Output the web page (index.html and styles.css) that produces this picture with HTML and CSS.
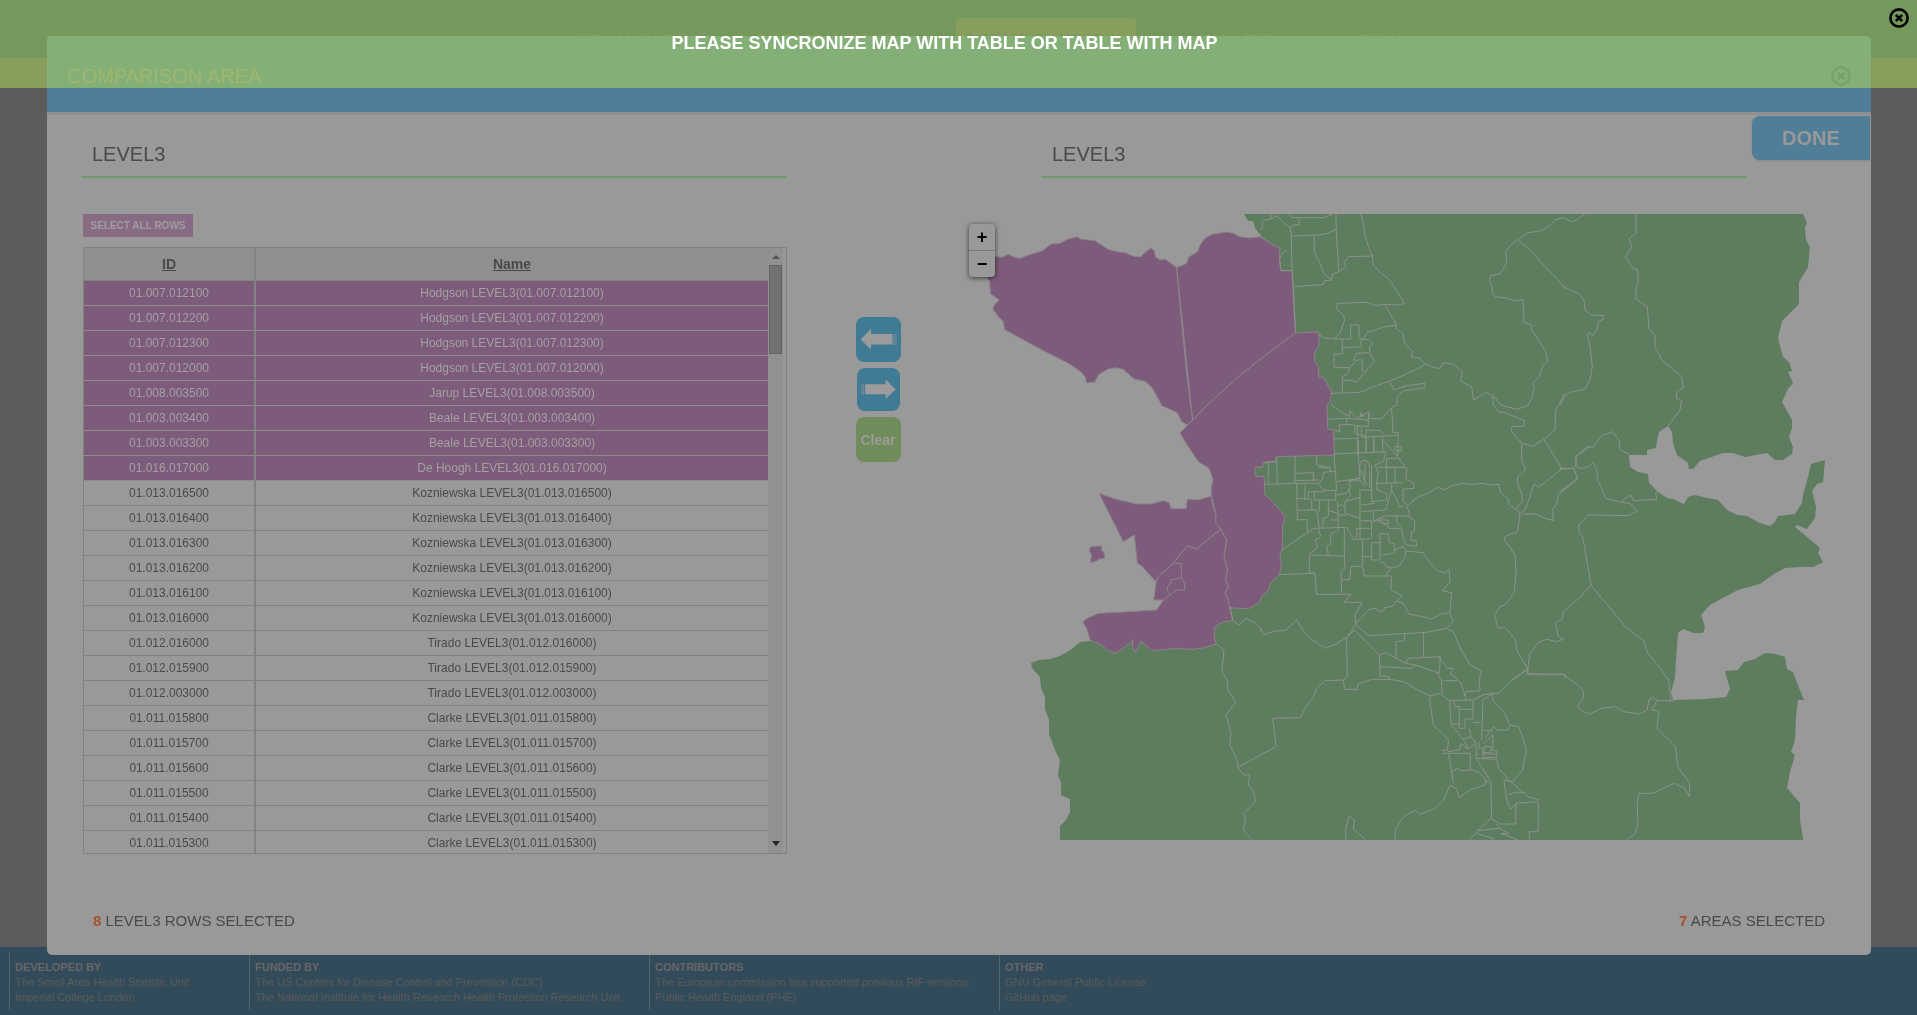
FILE: index.html
```html
<!DOCTYPE html>
<html lang="en">
<head>
<meta charset="utf-8">
<title>Comparison area</title>
<link rel="stylesheet" href="styles.css">
</head>
<body>
<div class="page">
  <header class="site-header">
    <nav class="site-nav">
      <a class="tab tab-risk" href="#">RISK ANALYSIS</a>
      <a class="tab tab-mapping" href="#">DISEASE MAPPING</a>
      <a class="tab tab-submission current" href="#">DISEASE SUBMISSION</a>
      <a class="tab tab-manager" href="#">MANAGER</a>
      <a class="tab tab-login" href="#">LOG IN</a>
    </nav>
    <div class="strip"></div>
  </header>
  <main class="backdrop"></main>
  <footer class="site-footer">
    <section class="credit credit-dev"><h4>DEVELOPED BY</h4><a href="#">The Small Area Health Statistic Unit</a><a href="#">Imperial College London</a></section>
    <section class="credit credit-fund"><h4>FUNDED BY</h4><a href="#">The US Centers for Disease Control and Prevention (CDC)</a><a href="#">The National Institute for Health Research Health Protection Research Unit</a></section>
    <section class="credit credit-contrib"><h4>CONTRIBUTORS</h4><a href="#">The European commission has supported previous RIF versions</a><a href="#">Public Health England (PHE)</a></section>
    <section class="credit"><h4>OTHER</h4><a href="#">GNU General Public License</a><a href="#">GitHub page</a></section>
  </footer>
</div>

<div class="modal" role="dialog" aria-labelledby="modal-title">
  <div class="modal-header">
    <h1 id="modal-title">COMPARISON AREA</h1>
    <button class="close close-modal" aria-label="Close comparison area"><svg viewBox="0 0 20 20" width="20" height="20"><circle cx="10" cy="10" r="8.6"/><path d="M6.8 6.8l6.4 6.4M13.2 6.8l-6.4 6.4"/></svg></button>
  </div>
  <button class="done">DONE</button>
  <div class="titles">
    <h2>LEVEL3</h2>
    <h2>LEVEL3</h2>
  </div>
  <div class="content">
    <div class="table-side">
      <button class="select-all">SELECT ALL ROWS</button>
      <div class="grid-box">
        <table class="areas">
          <thead><tr><th class="col-id">ID</th><th>Name</th></tr></thead>
          <tbody>
            <tr class="on"><td>01.007.012100</td><td>Hodgson LEVEL3(01.007.012100)</td></tr>
            <tr class="on"><td>01.007.012200</td><td>Hodgson LEVEL3(01.007.012200)</td></tr>
            <tr class="on"><td>01.007.012300</td><td>Hodgson LEVEL3(01.007.012300)</td></tr>
            <tr class="on"><td>01.007.012000</td><td>Hodgson LEVEL3(01.007.012000)</td></tr>
            <tr class="on"><td>01.008.003500</td><td>Jarup LEVEL3(01.008.003500)</td></tr>
            <tr class="on"><td>01.003.003400</td><td>Beale LEVEL3(01.003.003400)</td></tr>
            <tr class="on"><td>01.003.003300</td><td>Beale LEVEL3(01.003.003300)</td></tr>
            <tr class="on"><td>01.016.017000</td><td>De Hoogh LEVEL3(01.016.017000)</td></tr>
            <tr><td>01.013.016500</td><td>Kozniewska LEVEL3(01.013.016500)</td></tr>
            <tr><td>01.013.016400</td><td>Kozniewska LEVEL3(01.013.016400)</td></tr>
            <tr><td>01.013.016300</td><td>Kozniewska LEVEL3(01.013.016300)</td></tr>
            <tr><td>01.013.016200</td><td>Kozniewska LEVEL3(01.013.016200)</td></tr>
            <tr><td>01.013.016100</td><td>Kozniewska LEVEL3(01.013.016100)</td></tr>
            <tr><td>01.013.016000</td><td>Kozniewska LEVEL3(01.013.016000)</td></tr>
            <tr><td>01.012.016000</td><td>Tirado LEVEL3(01.012.016000)</td></tr>
            <tr><td>01.012.015900</td><td>Tirado LEVEL3(01.012.015900)</td></tr>
            <tr><td>01.012.003000</td><td>Tirado LEVEL3(01.012.003000)</td></tr>
            <tr><td>01.011.015800</td><td>Clarke LEVEL3(01.011.015800)</td></tr>
            <tr><td>01.011.015700</td><td>Clarke LEVEL3(01.011.015700)</td></tr>
            <tr><td>01.011.015600</td><td>Clarke LEVEL3(01.011.015600)</td></tr>
            <tr><td>01.011.015500</td><td>Clarke LEVEL3(01.011.015500)</td></tr>
            <tr><td>01.011.015400</td><td>Clarke LEVEL3(01.011.015400)</td></tr>
            <tr><td>01.011.015300</td><td>Clarke LEVEL3(01.011.015300)</td></tr>
          </tbody>
        </table>
        <div class="scrollbar" aria-hidden="true">
          <span class="arrow arrow-up"></span>
          <span class="thumb"></span>
          <span class="arrow arrow-down"></span>
        </div>
      </div>
    </div>
    <div class="sync">
      <button class="sync-btn" aria-label="Map to table"><svg viewBox="0 0 45 45"><path d="M4.500 22.500L15 12V17H36.500V27.500H15V32.500z"/><path class="tail" d="M38 17v11M40 17v11"/></svg></button>
      <button class="sync-btn small" aria-label="Table to map"><svg viewBox="0 0 45 45"><path d="M40.500 22.500L30 12V17H8.500V27.500H30V32.500z"/><path class="tail" d="M7 17v11M5 17v11"/></svg></button>
      <button class="sync-btn clear">Clear</button>
    </div>
    <div class="map">
      <svg class="map-canvas" viewBox="969 214 856 626" role="img" aria-label="Map of areas">
        <path class="land" d="M1244,214L1248,221 1253,221 1255,228 1262,237 1279,250 1285,300 1290,340 1290,420 1262,462 1254,466 1254,475 1264,478 1265,500 1270,580 1240,600 1215,625 1212,638 1150,645 1141,638 1133,638 1115,648 1095,638 1090,641 1080,642 1072,649 1060,656 1050,659 1039,660 1031,663 1032,668 1040,677 1041,688 1045,697 1045,709 1049,720 1049,734 1055,750 1060,760 1058,776 1061,782 1061,795 1070,799 1070,812 1066,820 1060,826 1060,840H1803L1803,838 1800,820 1800,803 1787,788 1790,772 1795,755 1791,752 1795,740 1796,717 1798,700 1804,700 1799,688 1793,672 1787,669 1785,657 1776,654 1765,653 1755,659 1744,662 1738,670 1725,671 1730,689 1726,697 1706,699 1673,700 1671,692 1675,678 1676,660 1678,633 1683,629 1694,633 1703,633 1705,627 1701,615 1710,605 1719,600 1738,590 1760,584 1774,574 1785,568 1800,567 1813,567 1823,562 1818,553 1820,548 1807,537 1795,527 1797,525 1807,529 1815,518 1816,507 1812,491 1817,484 1823,482 1825,460 1811,464 1808,477 1803,495 1802,503 1795,514 1778,516 1775,522 1770,526 1760,523 1747,516 1737,515 1727,510 1718,500 1707,498 1695,495 1688,497 1684,504 1673,499 1667,498 1657,491 1649,483 1648,474 1638,472 1630,467 1629,455 1647,455 1647,450 1656,448 1657,441 1659,432 1668,426 1672,432 1673,443 1677,455 1688,463 1689,469 1693,469 1700,461 1723,453 1733,453 1745,457 1767,453 1775,460 1783,460 1792,454 1793,447 1789,437 1792,428 1792,420 1782,402 1788,389 1793,383 1788,372 1792,371 1789,362 1783,357 1778,338 1782,321 1799,304 1799,282 1808,267 1810,247 1806,240 1805,227 1807,223 1803,214z"/>
        <!-- areas picked in the table -->
        <g class="picked" transform="translate(960 200) scale(.33333)">
          <path d="M100,168L125,172 145,163 165,172 180,175 215,162 248,152 262,140 275,132 300,130 325,117 352,110 360,117 405,122 425,135 445,148 470,155 495,158 525,170 542,170 560,153 572,145 582,150 587,172 603,180 615,177 640,195 650,203 663,345 680,520 698,660 682,675 665,665 652,638 605,617 597,600 575,562 557,545 522,537 490,508 465,503 442,508 415,525 405,546 380,549 375,530 362,515 325,490 250,452 134,389 130,365 115,350 98,326 105,312 118,300 92,282 88,240 82,237z"/>
          <path d="M650,203L680,190 685,172 712,155 720,135 735,115 755,103 800,96 820,100 840,110 870,114 900,110 940,135 960,145 958,180 962,212 996,212 1000,300 1007,399 940,448 845,522 745,612 698,660z"/>
          <path d="M660,698L698,660 745,612 845,522 940,448 1007,399 1077,396 1077,435 1063,460 1065,485 1075,500 1077,530 1090,532 1115,575 1111,605 1101,615 1103,687 1120,690 1124,765 950,770 945,783 912,787 908,800 885,802 885,822 888,828 912,830 915,885 938,905 975,950 968,980 967,1045 960,1065 964,1100 957,1125 930,1150 927,1170 908,1185 895,1210 865,1226 840,1225 808,1223 805,1200 795,1180 805,1160 797,1140 802,1110 792,1070 800,1020 782,988 765,970 768,945 755,890 753,870 759,838 747,805 715,785 680,733z"/>
        </g>
        <g class="picked" transform="translate(1060 440) scale(.33333)">
          <path d="M117,160L170,178 230,192 272,192 310,182 328,188 333,206 378,206 382,177 415,180 453,168 458,195 468,225 467,250 482,268 445,297 410,327 383,317 335,375 295,410 288,425 245,378 232,370 223,285 190,305z"/>
          <path d="M482,268L500,300 492,350 502,390 497,420 505,440 495,460 505,480 510,510 518,542 490,545 463,562 463,590 469,612 425,625 395,628 350,625 275,632 244,604 226,636 217,620 220,600 190,625 165,640 145,632 125,615 90,600 80,565 68,546 82,535 115,520 205,515 290,510 310,480 281,480 288,430 295,410 335,375 383,317 410,327 445,297z"/>
          <path d="M90,322L100,319 125,318 125,332 131,335 135,355 115,358 110,363 92,368 94,345 88,332z"/>
          <path class="inner" d="M340,370H363L365,415 374,432 374,450 350,450 325,468 310,480M330,465L322,450 322,440 332,432 332,420 365,413"/>
        </g>
        <!-- boundaries, north -->
        <g class="lines" transform="translate(1260 200) scale(.33333)">
          <path d="M32,42V57L7,62V85L0,90M32,57L52,47 72,70 90,83 102,75 118,74 117,53 95,52 88,42M117,53L190,53 218,42M90,83L94,108 175,105 205,100 227,88M228,42L229,100 237,215M94,108L96,212 100,260 104,345 107,398M62,212H96M58,180L68,158 80,150M100,260L190,254 192,243 215,240 218,222 237,215 258,200 252,188 265,170 338,168M162,108L163,155 180,190 192,222 215,240"/>
          <path d="M303,42L310,70 315,105 325,140 337,168 340,195 365,222 385,235 412,275 433,310 415,315 380,313 345,316 320,307 232,310 231,330 250,343 254,360 240,400 222,417 190,413 177,402"/>
          <path d="M375,313L395,350 410,372 407,385 430,402 433,428 458,455 453,470 480,475 495,492 525,503 540,505 550,488 580,493 607,515 602,543 635,560 641,600 678,577 703,590 722,615 770,628 805,617 817,590 823,560 818,550 838,530 850,495 863,485 858,455 832,415 815,390 815,375 790,367 792,340 788,298 765,303 735,293 705,290 697,280 697,262 688,240 692,228 722,220 740,190 738,155 750,138 772,118 805,98 845,92 870,76 885,60 910,53 935,65 955,58 975,42"/>
          <path d="M772,118L815,155 850,195 890,235 912,263M915,580L887,630 885,690 852,718 818,738 785,730 755,695 755,680 793,678 793,662 735,638 715,635 700,615 698,590"/>
          <path d="M410,375L375,380 320,398 313,417 305,420M222,417H272V375H297V415L328,420 338,432 328,440 330,457 343,485 312,520 290,547 270,540 247,543M247,420V462H222V503H270L290,480H307V515M247,443L303,440V418M280,482L290,460 328,458M270,503L262,522 247,530V577"/>
          <path d="M211,580L300,577 350,557 388,543 440,522 480,503 495,492M388,543L402,570 440,557 495,550V563L430,573 412,590 410,615 395,622 365,657 328,655 327,635 290,655 270,632 268,650 250,640 237,630 222,622 215,610M395,625L399,698H415L413,770"/>
          <path d="M785,732V780L797,810 773,830 772,850 785,880 787,905 768,925M852,718L902,800 900,812 835,862 822,852 810,890 795,930 780,940M902,808L942,805M990,740L948,768V800"/>
          <path d="M203,658L260,655 325,660M222,690L240,695 237,675 260,673V655M260,673L325,680V640M285,678V700L320,710M293,678V765M222,717L295,715M305,680V712L413,706M318,690V760M318,690L360,692 375,705M342,708V755M368,708V755M300,640L312,647 300,650 305,638M405,740H425V752H405z"/>
        </g>
        <!-- boundaries, centre -->
        <g class="lines" transform="translate(1260 440) scale(.33333)">
          <path d="M413,50L430,75 440,85 438,118 460,128 463,145 428,148 430,185 445,195M445,195L475,170 505,160 535,140 550,150 575,138 605,130 640,133 670,130 690,135 718,133 720,155 745,178 747,195 765,205 777,215 780,225 773,275 733,290 735,302 765,345 768,400 762,460 735,495 720,500 703,525 715,565 735,562 767,600 770,630 803,688 805,703H915V715M787,222L825,222 850,233 880,242 878,205 890,195 895,160 952,115 942,90M960,472L910,515 908,535 887,548 895,590 910,598 890,605 860,598 835,607 810,640 803,688"/>
          <path d="M0,565L10,585 45,573 75,572 110,540 130,572 150,595 195,625 230,612 270,585 287,550 305,533 325,510 345,505 365,517 375,503 397,498 410,483 430,490 447,522 500,533 515,538 540,523 568,518 580,545 560,565 500,577 325,587 287,553M570,518L575,458 547,452 570,425 567,388 555,398 530,392 500,355 490,338 437,333M287,550L285,525 307,487 252,487 273,463 170,463 165,400 57,404M165,400L148,398V345L253,348 255,385 243,395 245,460M395,408L393,450 427,467 410,483M245,420L270,418 272,380 308,378 313,408 390,408M435,333L437,350 415,380 395,382 378,408M395,382L378,380 375,370 360,365"/>
          <path d="M65,330L162,265 260,262 280,298 330,297M148,340L172,325 165,300 182,290 175,262M205,345L200,318 213,315 210,285 235,270 233,185M253,262V350M308,298V375M335,308V360H360V280L385,282 388,308 403,310V340L365,345M335,308H360M308,350H335M403,330L430,320 440,333M388,265L425,265 430,300 440,315 470,318 468,302 453,300 455,275 465,272 463,240 450,235 445,210 437,195M330,248L355,240 390,265M340,243L375,228 445,228M355,240L385,240V252L360,247M410,228V248L425,262"/>
          <path d="M12,68L50,65M25,68V130M50,50L52,130M105,48V130M15,133L110,130M107,100L160,98V125M170,45V75L210,82 212,95 190,97 188,118 175,130M175,82L205,85M107,122L175,120M110,130L175,130 190,150 230,152M210,95H228M110,130L112,240 140,238 143,275M110,175L155,178M135,130V180M145,172V155H195M163,155V180H227V155M112,210H170L178,262M155,180V210M178,180V215M205,180V230L190,235 188,262M205,212L235,220M222,42L230,150M295,0V38L300,115 230,125M222,42L378,35M318,0V35M340,0V35M368,0L413,50"/>
          <path d="M300,75L305,62H320L328,75 330,145M300,75V110M300,115L265,122 272,140 260,160 230,165M305,90L315,130 330,140M315,70V130M345,75L355,100 350,130 430,128M335,75V150M380,55L378,82H405V130M380,82V128M355,82H435M380,55H413M345,75L370,65 378,35M300,150V295M303,150H335V185L380,180V160L350,150V130M303,195L345,190M303,215L378,210 385,180 395,150V130M395,150L415,190V200H430M340,215V240M303,242H335V295M255,185L300,172M265,145L272,165 255,185V220L300,235M235,225H258M233,200L245,193 255,205M210,240H235M290,293V265H330M270,125L300,120 315,140"/>
          <path d="M755,720L803,688"/>
        </g>
        <!-- boundaries, east -->
        <g class="lines" transform="translate(1560 200) scale(.33333)">
          <path d="M12,263L20,258 12,263 55,280 72,300 75,330 95,345 132,347 128,358 115,365 110,390 97,408 90,398 82,403 90,440 97,500 90,540 75,567 30,577 15,590 0,615M228,42V100L208,115 215,138 197,172 212,195 220,208 233,208 235,245 228,265 228,297 262,320 267,385 285,405 285,440 305,480 365,530 370,562 350,575V597L366,603 360,630 325,677"/>
          <path d="M208,764L180,748 178,722 157,695 125,707 100,740 80,742 48,770V800L60,805 80,803 100,787 110,810 113,840 138,895 185,907 195,895 212,885 220,902 290,898 287,878 298,872M0,805L42,805 52,838 0,880M185,907L210,910 232,933 205,947 85,945 57,975 57,995 68,1010 75,1050 93,1155 60,1191M93,1155L129,1200"/>
        </g>
        <!-- boundaries, south -->
        <g class="lines" transform="translate(1220 600) scale(.39541 .33333)">
          <path d="M-10,132L0,140 10,150 5,215 18,240 20,270 40,308 15,345 28,400 25,435 42,475 45,502 60,525 75,525 72,555 85,575 90,605 60,640 65,660 58,690 80,718M45,502L142,440 133,355 203,353 220,315 235,295 245,265 265,242 312,240 322,230 320,115M312,240L315,268H348V252L385,238 430,238 465,245 500,270 533,288"/>
          <path d="M25,20L33,62 48,75 65,55 90,70 108,92M322,105L342,92 403,165 405,228 428,230V240M403,200L485,205 495,195 555,220 557,170 475,175 470,190 495,195M403,165L418,158 470,190M445,175V125L467,122V102M515,98V172M548,165L575,205 590,205 582,220 610,250 620,290M575,88L590,95 610,150 632,195 662,213 655,240 658,272 620,275 622,300 580,302 555,280 533,288 530,300 540,375 578,420 575,450 562,452M548,220L560,240 562,280M565,242H600"/>
          <path d="M580,302L585,375 615,418 628,447 648,430 635,410 630,385M622,300H640L665,285 690,280M665,300L690,280 705,280 735,245 777,207V222L870,223 885,238 905,255 920,275 918,295 903,320 920,335 935,342 965,325 1000,320 1020,335 1060,342 1080,330 1085,300 1095,292 1105,302 1092,330 1110,333 1105,385 1152,440 1158,500 1188,550 1187,590 1175,565 1150,550 1120,565 1095,580 1060,580 1055,605 1057,670 1050,700 1030,718M1105,302H1148M970,0L1025,80 1070,120 1082,160 1110,200 1135,240 1140,300"/>
          <path d="M687,285L692,305 720,340 733,375 755,380 768,420 775,450 765,510 740,545 718,540 725,600 735,628 748,610 805,605V695H782V718M748,612V672H708L685,655 650,695 632,718M648,435V475L685,545 687,655M648,475L700,478 705,505 735,545 780,590 808,600M730,585L745,577H770M650,692L708,685 700,672M708,685L730,700 710,700 755,720M650,700L695,718M733,375L728,390 700,390 692,380 670,415M668,392H690M665,300L662,420M655,425V445L665,445V472H700V452H690V405L668,430M668,440H685V458H668zM665,462H700"/>
          <path d="M562,460H633V510M575,455L605,450 610,430 625,447M578,460L585,512 590,548M585,515L600,505 610,512 640,510 660,522 672,540 670,555 635,568 605,592 597,565 582,555 565,600 545,625 505,643 495,632 470,645 458,660 443,690V718M672,545L680,547M318,718V685L327,648 340,660 337,688 368,718M590,305L595,320H605V385H620V357H640V302M605,328H638M585,372H605M640,368H660M615,418L635,410"/>
        </g>
      </svg>
      <div class="zoom-control"><button aria-label="Zoom in">+</button><button aria-label="Zoom out">−</button></div>
    </div>
  </div>
  <div class="counts">
    <p><b>8</b> LEVEL3 ROWS SELECTED</p>
    <p><b>7</b> AREAS SELECTED</p>
  </div>
</div>

<div class="notice" role="alert">
  <p>PLEASE SYNCRONIZE MAP WITH TABLE OR TABLE WITH MAP</p>
  <button class="close" aria-label="Dismiss"><svg viewBox="0 0 20 20" width="20" height="20"><circle cx="10" cy="10" r="8.6"/><path d="M6.8 6.8l6.4 6.4M13.2 6.8l-6.4 6.4"/></svg></button>
</div>
</body>
</html>
```
FILE: styles.css
```css
* { box-sizing: border-box; }
body {
  margin: 0;
  font-family: "Liberation Sans", Arial, sans-serif;
  color: #4a4a4a;
  background: #5c5c5c;
}
h1, h2, h4, p { margin: 0; font-weight: normal; }
button { border: 0; padding: 0; font-family: inherit; cursor: pointer; }
a { color: inherit; text-decoration: none; }

/* page behind the dialog */
.page { display: flex; flex-direction: column; min-height: 100vh; }
.site-nav {
  display: flex;
  align-items: flex-end;
  height: 58px;
  padding-left: 542px;
  background: #1f303e;
}
.tab {
  height: 40px;
  padding-top: 12px;
  font-size: 15px;
  line-height: 17px;
  text-align: center;
  color: #5e413e;
  border-radius: 4px 4px 0 0;
}
.tab-risk { width: 180px; }
.tab-mapping { width: 208px; }
.tab-submission { width: 180px; margin-left: 26px; }
.tab-manager { width: 200px; }
.tab-login { width: 80px; }
.tab.current { background: #5e413e; color: #1f303e; }
.strip { height: 30px; background: #5e413e; }
.backdrop { flex: 1; }
.site-footer {
  display: flex;
  height: 68px;
  padding: 5px 9px;
  background: #324b5a;
  color: #5c5a58;
  font-size: 11px;
  line-height: 15px;
}
.credit {
  display: flex;
  flex-direction: column;
  padding: 8px 0 0 5px;
  border-left: 1px solid #54656f;
  white-space: nowrap;
}
.credit h4 { font-size: 11px; font-weight: bold; color: #666; }
.credit-dev { width: 240px; }
.credit-fund { width: 400px; }
.credit-contrib { width: 350px; }

/* dialog */
.modal {
  position: fixed;
  inset: 36px 46px 60px 47px;
  display: flex;
  flex-direction: column;
  background: #999;
  border-radius: 5px;
}
.modal-header {
  display: flex;
  justify-content: space-between;
  align-items: center;
  height: 79px;
  padding: 4px 20px 0;
  background: #507d97;
  border-bottom: 3px solid #8f8f8f;
  border-radius: 5px 5px 0 0;
}
.modal-header h1 { font-size: 20px; line-height: 24px; color: #a79180; }
.close { width: 20px; height: 20px; background: none; color: #000; }
.close svg { display: block; fill: none; stroke: currentColor; stroke-width: 2.600; }
.close-modal { color: #225166; }
.done {
  position: absolute;
  top: 80px;
  right: 1px;
  width: 118px;
  height: 44px;
  border-radius: 8px 0 0 8px;
  background: #507d97;
  color: #999;
  font-size: 20px;
  font-weight: bold;
  box-shadow: 0 1px 2px #888;
}
.titles {
  display: grid;
  grid-template-columns: 706fr 706fr;
  gap: 254px;
  padding: 27px 124px 0 34px;
}
.titles h2 {
  height: 36px;
  padding-left: 11px;
  border-bottom: 2px solid #6c996e;
  font-size: 20px;
  line-height: 24px;
}
.content {
  display: flex;
  justify-content: space-between;
  padding: 36px 46px 0 36px;
}
.table-side { width: 704px; }
.select-all {
  display: block;
  width: 110px;
  height: 23px;
  background: #876b85;
  color: #a39aa2;
  font-size: 10px;
  font-weight: bold;
}
.grid-box {
  display: flex;
  height: 607px;
  margin-top: 10px;
  padding-right: 3px;
  border: 1px solid #828282;
  overflow: hidden;
}
.areas {
  flex: 1;
  table-layout: fixed;
  border-collapse: separate;
  border-spacing: 0;
  font-size: 12px;
  text-align: center;
}
.areas th {
  height: 33px;
  padding: 0;
  border-bottom: 1px solid #828282;
  background: #8f8f8f;
  font-size: 14px;
  text-decoration: underline;
}
.areas td { height: 25px; padding: 0; border-bottom: 1px solid #828282; }
.areas th:first-child, .areas td:first-child { border-right: 2px solid #828282; }
.col-id { width: 172px; }
.areas .on td { background: #7d5b7a; color: #a4a0a4; border-bottom-color: #8f8c8f; }
.scrollbar {
  display: flex;
  flex-direction: column;
  align-items: center;
  width: 15px;
  padding: 7px 0 7px;
  background: #919191;
}
.arrow { border: 4px solid transparent; border-top-width: 0; border-bottom-width: 0; }
.arrow-up { border-bottom: 4px solid #555; }
.arrow-down { border-top: 5px solid #222; margin-top: auto; }
.thumb { width: 13px; height: 89px; margin-top: 6px; background: #717171; border: 1px solid #636363; }

.sync { display: flex; flex-direction: column; align-items: center; gap: 6px; padding-top: 103px; }
.sync-btn { width: 45px; height: 45px; border-radius: 8px; background: #3f7b95; }
.sync-btn.small { width: 43px; height: 43px; }
.sync-btn svg { display: block; width: 100%; height: 100%; fill: #9b9b9b; }
.sync-btn .tail { stroke: #7d909a; stroke-width: 1; }
.sync-btn.clear { background: #708c5a; color: #9c9c98; font-size: 14px; font-weight: bold; }

.map { position: relative; width: 856px; }
.map-canvas { display: block; width: 100%; }
.land { fill: #5e7d5e; }
.picked path { fill: #7d5b7a; stroke: #8c838b; stroke-width: 1; vector-effect: non-scaling-stroke; }
.picked .inner { fill: none; }
.lines path { fill: none; stroke: #8b928b; stroke-width: 1; vector-effect: non-scaling-stroke; }
.zoom-control {
  position: absolute;
  top: 10px;
  left: 0;
  width: 26px;
  border-radius: 4px;
  background: #999;
  box-shadow: 0 1px 5px rgba(0, 0, 0, .65);
}
.zoom-control button {
  display: block;
  width: 26px;
  height: 26px;
  background: none;
  color: #000;
  font-size: 18px;
  line-height: 25px;
  font-weight: bold;
}
.zoom-control button:first-child { height: 27px; border-bottom: 1px solid #7a7a7a; }

.counts {
  display: flex;
  justify-content: space-between;
  margin-top: auto;
  padding: 0 46px 24px;
  font-size: 15px;
  line-height: 20px;
}
.counts b { color: #a8502c; }

/* message over everything */
.notice {
  position: fixed;
  inset: 0 0 auto;
  display: flex;
  height: 88px;
  padding: 8px 8px 0 0;
  background: rgba(154, 198, 105, .7);
}
.notice p {
  flex: 1;
  padding-top: 24px;
  color: #fff;
  font-size: 18px;
  line-height: 22px;
  font-weight: bold;
  text-align: center;
}
```
